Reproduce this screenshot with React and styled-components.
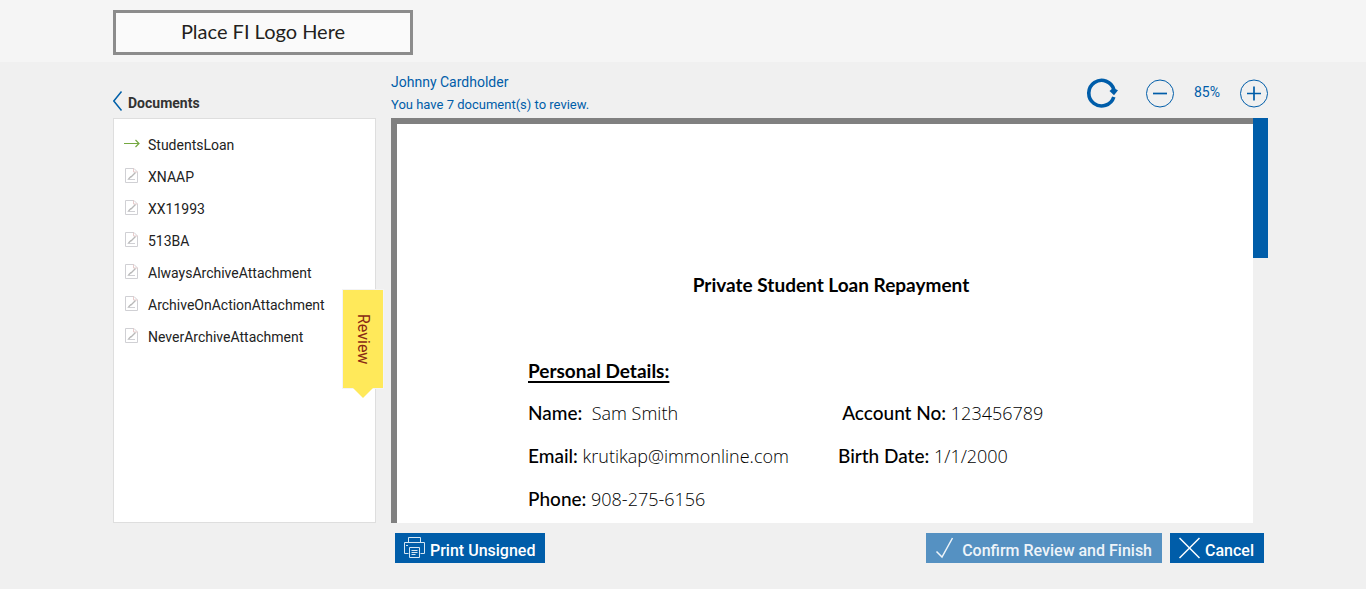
import * as React from "react";
import styled, { createGlobalStyle } from "styled-components";

const GlobalStyle = createGlobalStyle`
    *, *::before, *::after {
        box-sizing: border-box;
    }

    body {
        margin: 0;
        background: #f0f0f0;
        color: #222;
        font-family: Roboto, "Liberation Sans", sans-serif;
        font-size: 14px;
    }

    h1, h2, p, ul {
        margin: 0;
        padding: 0;
        font-size: inherit;
    }
`

const Header = styled.header`
    height: 62px;
    padding: 10px 98px 0 113px;
    background: #f5f5f5;
`

const LogoBox = styled.div`
    display: flex;
    align-items: center;
    justify-content: center;
    width: 300px;
    height: 45px;
    padding-bottom: 4px;
    border: 3px solid #8c8c8c;
    background: #fafafa;
    color: #231f20;
    font-family: Lato, sans-serif;
    font-size: 20px;
    line-height: 24px;
`

const Layout = styled.main`
    display: grid;
    grid-template-columns: 263px minmax(0, 1fr);
    grid-template-rows: 56px calc(100vh - 184px) auto;
    column-gap: 15px;
    min-width: 960px;
    padding: 0 98px 0 113px;
`

const SidebarTitle = styled.div`
    display: flex;
    align-items: flex-end;
    gap: 5px;
    padding-bottom: 6px;
    color: #333;
    font-weight: 700;
    line-height: 18px;
`

const BackButton = styled.button`
    display: flex;
    padding: 0 0 1px;
    border: 0;
    background: none;
    color: #0060a9;
    cursor: pointer;
`

const Toolbar = styled.div`
    display: flex;
    justify-content: space-between;
    color: #005da9;
`

const Summary = styled.div`
    display: grid;
    gap: 1px;
    align-content: start;
    padding-top: 9px;
`

const UserName = styled.p`
    font-size: 14px;
    line-height: 22px;
`

const ReviewCount = styled.p`
    font-size: 13px;
    line-height: 22px;
`

const ZoomControls = styled.div`
    display: flex;
    align-items: center;
    padding-top: 6px;
`

const ZoomValue = styled.span`
    width: 65px;
    padding: 0 0 2px 1px;
    font-size: 14px;
    line-height: 16px;
    text-align: center;
`

const IconButton = styled.button`
    display: flex;
    margin-right: ${({ $gap }) => $gap || 0}px;
    padding: 0;
    border: 0;
    background: none;
    color: inherit;
    cursor: pointer;
`

const Sidebar = styled.nav`
    position: relative;
    padding: 10px;
    border: 1px solid #dedede;
    background: #fff;
`

const DocumentList = styled.ul`
    list-style: none;
`

const DocumentLink = styled.a`
    display: flex;
    align-items: center;
    gap: 8px;
    height: 32px;
    color: #222;
    line-height: 20px;
    text-decoration: none;

    svg {
        flex: none;
    }
`

const ReviewTab = styled.button`
    position: absolute;
    top: 171px;
    right: -8px;
    width: 40px;
    height: 98px;
    padding: 0;
    border: 0;
    background: #ffe95a;
    box-shadow: 0 0 0 1px #f4f4f4;
    color: #8a2a14;
    font-family: inherit;
    font-size: 16px;
    line-height: 38px;
    writing-mode: vertical-rl;
    cursor: pointer;

    &::after {
        content: "";
        position: absolute;
        top: 98px;
        left: 10px;
        border: 10px solid transparent;
        border-top-color: #ffe95a;
        border-bottom: 0;
    }
`

const Viewer = styled.section`
    display: flex;
    min-height: 0;
`

const Page = styled.article`
    flex: 1;
    overflow: hidden;
    padding: 139px 119px 0 131px;
    border: solid #808080;
    border-width: 6px 0 0 6px;
    background: #fff;
    color: #000;
    font-family: "Open Sans", "Noto Sans", sans-serif;
    font-size: 18px;
    line-height: 43px;
    white-space: pre;
`

const PageTitle = styled.h1`
    margin-bottom: 43px;
    font-family: Lato, sans-serif;
    font-size: 19px;
    text-align: center;
`

const PageHeading = styled.h2`
    font-family: Lato, sans-serif;
    font-size: 19px;
    text-decoration: underline;
    text-decoration-thickness: 2px;
    text-underline-offset: 3px;
`

const FieldRow = styled.div`
    display: grid;
    grid-template-columns: 310px 1fr;
    height: 43px;
    line-height: 41px;
`

const FieldLabel = styled.span`
    font-family: Lato, sans-serif;
    font-size: 19px;
    font-weight: 500;
`

const FieldValue = styled.span`
    font-weight: 300;
`

const ScrollTrack = styled.div`
    width: 15px;
`

const ScrollThumb = styled.div`
    height: 140px;
    background: #005da9;
`

const Actions = styled.footer`
    display: flex;
    grid-column: 2;
    gap: 8px;
    padding: 10px 4px 26px;
`

const ActionButton = styled.button`
    display: flex;
    align-items: center;
    gap: ${({ $gap }) => $gap || 5}px;
    height: 30px;
    margin-right: ${({ $first }) => ($first ? "auto" : 0)};
    padding: 0 10px 0 9px;
    border: 0;
    background: #005da9;
    color: #fff;
    font-family: inherit;
    font-size: 16px;
    font-weight: 500;
    line-height: 20px;
    white-space: nowrap;
    cursor: pointer;

    span {
        padding-top: 5px;
    }

    &:disabled {
        background: #5591c2;
        color: #eef4f9;
        cursor: default;
    }
`

const documents = [
    "StudentsLoan",
    "XNAAP",
    "XX11993",
    "513BA",
    "AlwaysArchiveAttachment",
    "ArchiveOnActionAttachment",
    "NeverArchiveAttachment",
];

const fields = [
    [
        { label: "Name:", value: "  Sam Smith" },
        { label: " Account No:", value: " 123456789" },
    ],
    [
        { label: "Email:", value: " krutikap@immonline.com" },
        { label: "Birth Date:", value: " 1/1/2000" },
    ],
    [{ label: "Phone:", value: " 908-275-6156" }],
];

function ArrowIcon() {
    return (
        <svg width="16" height="16" viewBox="0 0 16 16" fill="none" stroke="#74a840" strokeWidth="1.200">
            <path d="M0 6.500h15M11.500 3l3.500 3.500-3.500 3.500" />
        </svg>
    );
}

function DocumentIcon() {
    return (
        <svg width="16" height="18" viewBox="0 0 16 18" fill="none" stroke="#d0d0d4">
            <path d="M1.500 .5h8.500l3.500 3.500v10.500h-12z" />
            <path d="M9.500 .5v3.500h4" stroke="#e8cccc" />
            <path d="M3.500 11.500h7.500" />
            <path d="M4.500 11l2.500-2.500M7 9l4.500-4.500" stroke="#b8b8b8" strokeWidth="1.400" />
        </svg>
    );
}

function PrinterIcon() {
    return (
        <svg width="21" height="22" viewBox="0 0 21 22" fill="none" stroke="#d5e6f3">
            <path d="M4.500 5.500v-5h12v5M4.500 16.500h-4v-11h20v11h-4M2 8.500h2" />
            <path d="M5.500 10.500h10v10h-10zM7.500 13.500h6M7.500 15.500h6M7.500 17.500h4" />
        </svg>
    );
}

export default function App() {
    return (
        <>
            <GlobalStyle />
            <Header>
                <LogoBox>Place FI Logo Here</LogoBox>
            </Header>
            <Layout>
                <SidebarTitle>
                    <BackButton aria-label="Back">
                        <svg width="10" height="20" viewBox="0 0 10 20" fill="none" stroke="currentColor" strokeWidth="1.500">
                            <path d="M8.500 .5L.8 10l7.700 9.500" />
                        </svg>
                    </BackButton>
                    <h2>Documents</h2>
                </SidebarTitle>
                <Toolbar>
                    <Summary>
                        <UserName>Johnny Cardholder</UserName>
                        <ReviewCount>You have 7 document(s) to review.</ReviewCount>
                    </Summary>
                    <ZoomControls>
                        <IconButton aria-label="Rotate" $gap={27}>
                            <svg width="32" height="30" viewBox="0 0 32 30" fill="none" stroke="currentColor" strokeWidth="3.600">
                                <path d="M27.800 19A12.800 12.800 0 1 1 28 12" />
                                <path d="M23.500 13l3.500-3 5 2.200-4 5z" fill="currentColor" stroke="none" />
                            </svg>
                        </IconButton>
                        <IconButton aria-label="Zoom out">
                            <svg width="29" height="29" viewBox="0 0 29 29" fill="none" stroke="currentColor">
                                <circle cx="15" cy="14.500" r="13.500" />
                                <path d="M8 14.500h14" strokeWidth="1.700" />
                            </svg>
                        </IconButton>
                        <ZoomValue>85%</ZoomValue>
                        <IconButton aria-label="Zoom in">
                            <svg width="29" height="29" viewBox="0 0 29 29" fill="none" stroke="currentColor">
                                <circle cx="15" cy="14.500" r="13.500" />
                                <path d="M8 14.500h14M15 7.500v14" strokeWidth="1.700" />
                            </svg>
                        </IconButton>
                    </ZoomControls>
                </Toolbar>
                <Sidebar>
                    <DocumentList>
                        {documents.map((name, index) => {
                            return (
                                <li key={name}>
                                    <DocumentLink href="#">
                                        {index === 0 ? <ArrowIcon /> : <DocumentIcon />}
                                        {name}
                                    </DocumentLink>
                                </li>
                            );
                        })}
                    </DocumentList>
                    <ReviewTab>Review</ReviewTab>
                </Sidebar>
                <Viewer>
                    <Page>
                        <PageTitle>Private Student Loan Repayment</PageTitle>
                        <PageHeading>Personal Details:</PageHeading>
                        {fields.map((row) => {
                            return (
                                <FieldRow key={row[0].label}>
                                    {row.map((field) => {
                                        return (
                                            <div key={field.label}>
                                                <FieldLabel>{field.label}</FieldLabel>
                                                <FieldValue>{field.value}</FieldValue>
                                            </div>
                                        );
                                    })}
                                </FieldRow>
                            );
                        })}
                    </Page>
                    <ScrollTrack>
                        <ScrollThumb />
                    </ScrollTrack>
                </Viewer>
                <Actions>
                    <ActionButton $first>
                        <PrinterIcon />
                        <span>Print Unsigned</span>
                    </ActionButton>
                    <ActionButton disabled $gap={8}>
                        <svg width="19" height="22" viewBox="0 0 19 22" fill="none" stroke="currentColor" strokeWidth="1.500">
                            <path d="M1.500 14.500l5.500 5.500L17.500 1" />
                        </svg>
                        <span>Confirm Review and Finish</span>
                    </ActionButton>
                    <ActionButton>
                        <svg width="21" height="22" viewBox="0 0 21 22" fill="none" stroke="currentColor" strokeWidth="1.500">
                            <path d="M.5 1l20 20M20.500 1l-20 20" />
                        </svg>
                        <span>Cancel</span>
                    </ActionButton>
                </Actions>
            </Layout>
        </>
    );
}
